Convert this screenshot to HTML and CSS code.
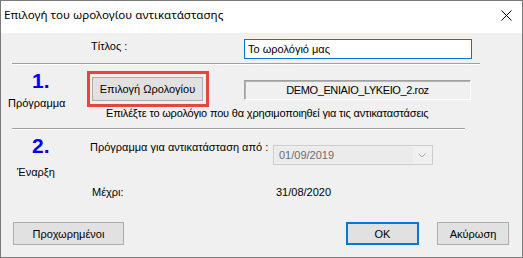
FILE: index.html
```html
<!DOCTYPE html>
<html lang="el">
<head>
<meta charset="utf-8">
<title>Επιλογή του ωρολογίου αντικατάστασης</title>
<link rel="stylesheet" href="styles.css">
</head>
<body>
<div class="window">
  <div class="titlebar">
    <span class="title">Επιλογή του ωρολογίου αντικατάστασης</span>
    <svg class="close" viewBox="0 0 11 11" width="11" height="11"><path d="M0.5 0.5L10.5 10.5M10.5 0.5L0.5 10.5" stroke="#000" stroke-width="1" fill="none"/></svg>
  </div>
  <div class="content">
    <div class="row-title">
      <span class="label">Τίτλος :</span>
      <div class="input">Το ωρολόγιό μας</div>
    </div>
    <div class="sep sep1"></div>
    <div class="section sec1">
      <div class="side">
        <div class="num">1.</div>
        <div class="side-label side-label1">Πρόγραμμα</div>
      </div>
      <div class="main">
        <div class="pick-row">
          <div class="highlight"><div class="btn pick-btn">Επιλογή Ωρολογίου</div></div>
          <div class="readonly">DEMO_ENIAIO_LYKEIO_2.roz</div>
        </div>
        <div class="hint">Επιλέξτε το ωρολόγιο που θα χρησιμοποιηθεί για τις αντικαταστάσεις</div>
      </div>
    </div>
    <div class="sep sep2"></div>
    <div class="section sec2">
      <div class="side">
        <div class="num">2.</div>
        <div class="side-label side-label2">Έναρξη</div>
      </div>
      <div class="main">
        <div class="from-row">
          <span class="from-label">Πρόγραμμα για αντικατάσταση από :</span>
          <div class="combo">
            <div class="combo-text">01/09/2019</div>
            <div class="combo-arrow"><svg viewBox="0 0 8 5" width="8" height="5"><path d="M0.5 0.5L4 4L7.5 0.5" stroke="#a6a6a6" stroke-width="1" fill="none"/></svg></div>
          </div>
        </div>
        <div class="to-row">
          <span class="to-label">Μέχρι:</span>
          <span class="to-date">31/08/2020</span>
        </div>
      </div>
    </div>
    <div class="footer">
      <div class="btn adv-btn">Προχωρημένοι</div>
      <div class="btn ok-btn">OK</div>
      <div class="btn cancel-btn">Ακύρωση</div>
    </div>
  </div>
</div>
</body>
</html>
```
FILE: styles.css
```css
* { box-sizing: border-box; }
html, body { margin: 0; padding: 0; }
body {
  width: 523px;
  height: 258px;
  overflow: hidden;
  background: #f0f0f0;
  font-family: "Liberation Sans", Arial, sans-serif;
  font-size: 11px;
  color: #000;
}
.window {
  width: 523px;
  height: 258px;
  border: 1px solid #7a7a7a;
  display: flex;
  flex-direction: column;
  background: #f0f0f0;
}
.titlebar {
  flex: none;
  height: 32px;
  background: #fff;
  display: flex;
  align-items: flex-start;
  padding-left: 3px;
}
.title {
  font-family: "Noto Sans", "Open Sans", sans-serif;
  font-size: 11.6px;
  line-height: 16px;
  margin-top: 6px;
}
.close {
  margin-left: auto;
  margin-right: 10px;
  margin-top: 9px;
}
.content {
  flex: 1;
  display: flex;
  flex-direction: column;
}
.row-title {
  display: flex;
  align-items: flex-start;
  margin-top: 6px;
  height: 20px;
  padding-left: 90px;
}
.row-title .label {
  width: 153px;
  line-height: 13px;
  margin-top: 1px;
}
.input {
  width: 228px;
  height: 20px;
  border: 1px solid #0078d7;
  background: #fff;
  padding-left: 3px;
  line-height: 18px;
}
.sep {
  height: 2px;
  border-top: 1px solid #a0a0a0;
  border-bottom: 1px solid #fff;
  margin-left: 11px;
  flex: none;
}
.sep1 { width: 468px; margin-top: 4px; }
.sep2 { width: 453px; }
.section { display: flex; flex: none; }
.sec1 { height: 63px; }
.sec2 { height: 90px; }
.side { width: 86px; flex: none; }
.num {
  font-weight: bold;
  font-size: 21px;
  line-height: 21px;
  color: #0000ff;
  margin-top: 5px;
  padding-left: 31px;
}
.side-label { line-height: 13px; }
.side-label1 { padding-left: 7px; margin-top: 6px; }
.side-label2 { padding-left: 16px; margin-top: 10px; }
.main { flex: 1; }
.pick-row {
  display: flex;
  align-items: flex-start;
  margin-top: 6px;
}
.highlight {
  border: 3px solid #e8453c;
  padding: 3px 3px 3px 2px;
}
.btn {
  background: #e1e1e1;
  border: 1px solid #adadad;
  display: flex;
  align-items: center;
  justify-content: center;
  white-space: nowrap;
}
.pick-btn { width: 111px; height: 24px; }
.readonly {
  margin-left: 35px;
  margin-top: 9px;
  width: 227px;
  height: 20px;
  border-top: 1px solid #a0a0a0;
  border-left: 1px solid #a0a0a0;
  border-right: 1px solid #fff;
  border-bottom: 1px solid #fff;
  box-shadow: inset 1px 1px 0 #b4b4b4;
  display: flex;
  align-items: center;
  justify-content: center;
  letter-spacing: -0.4px;
}
.hint {
  margin-left: 19px;
  line-height: 13px;
  white-space: nowrap;
  letter-spacing: -0.18px;
}
.from-row {
  display: flex;
  align-items: flex-start;
  margin-top: 11px;
}
.from-label {
  width: 186px;
  padding-left: 3px;
  line-height: 13px;
  white-space: nowrap;
}
.combo {
  margin-top: 4px;
  width: 160px;
  height: 20px;
  border: 1px solid #cccccc;
  background: #f0f0f0;
  padding: 1px;
  display: flex;
}
.combo-text {
  flex: 1;
  background: #ebebeb;
  color: #6d6d6d;
  padding-left: 4px;
  line-height: 16px;
}
.combo-arrow {
  width: 18px;
  display: flex;
  align-items: center;
  justify-content: center;
}
.to-row {
  display: flex;
  margin-top: 21px;
  line-height: 13px;
}
.to-label { width: 189px; padding-left: 5px; }
.footer {
  margin-top: auto;
  display: flex;
  padding: 0 13px 12px 12px;
}
.adv-btn { width: 111px; height: 23px; }
.ok-btn {
  margin-left: auto;
  width: 73px;
  height: 23px;
  border: 2px solid #0078d7;
}
.cancel-btn { margin-left: 18px; width: 72px; height: 23px; }
```
